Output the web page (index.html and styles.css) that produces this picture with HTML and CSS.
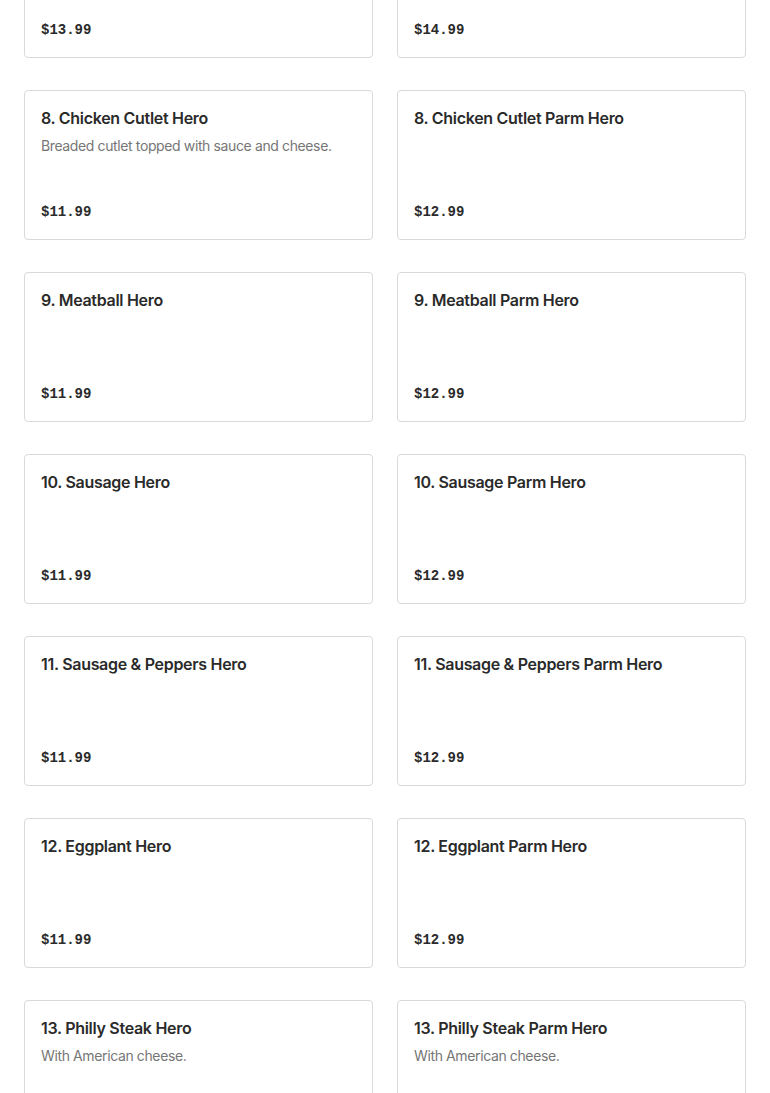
FILE: index.html
```html
<!DOCTYPE html>
<html>
<head>
<meta charset="utf-8">
<link rel="stylesheet" href="styles.css">
</head>
<body>
<div class="grid">
  <div class="card"><div class="price">$13.99</div></div>
  <div class="card"><div class="price">$14.99</div></div>

  <div class="card"><div class="title">8. Chicken Cutlet Hero</div><div class="desc">Breaded cutlet topped with sauce and cheese.</div><div class="price">$11.99</div></div>
  <div class="card"><div class="title">8. Chicken Cutlet Parm Hero</div><div class="price">$12.99</div></div>

  <div class="card"><div class="title">9. Meatball Hero</div><div class="price">$11.99</div></div>
  <div class="card"><div class="title">9. Meatball Parm Hero</div><div class="price">$12.99</div></div>

  <div class="card"><div class="title">10. Sausage Hero</div><div class="price">$11.99</div></div>
  <div class="card"><div class="title">10. Sausage Parm Hero</div><div class="price">$12.99</div></div>

  <div class="card"><div class="title">11. Sausage &amp; Peppers Hero</div><div class="price">$11.99</div></div>
  <div class="card"><div class="title">11. Sausage &amp; Peppers Parm Hero</div><div class="price">$12.99</div></div>

  <div class="card"><div class="title">12. Eggplant Hero</div><div class="price">$11.99</div></div>
  <div class="card"><div class="title">12. Eggplant Parm Hero</div><div class="price">$12.99</div></div>

  <div class="card"><div class="title">13. Philly Steak Hero</div><div class="desc">With American cheese.</div></div>
  <div class="card"><div class="title">13. Philly Steak Parm Hero</div><div class="desc">With American cheese.</div></div>
</div>
</body>
</html>
```

FILE: styles.css
```css
html, body {
  margin: 0;
  padding: 0;
  background: #ffffff;
  overflow: hidden;
}
.grid {
  display: grid;
  grid-template-columns: 1fr 1fr;
  column-gap: 24px;
  row-gap: 32px;
  padding: 0 24px;
  margin-top: -92px;
}
.card {
  box-sizing: border-box;
  height: 150px;
  border: 1px solid #d9d9d9;
  border-radius: 4px;
  padding: 16px 16px 17px;
  display: flex;
  flex-direction: column;
  font-family: Inter, "Noto Sans", sans-serif;
}
.title {
  font-size: 16px;
  font-weight: 600;
  line-height: 22px;
  color: #2a2a2a;
  letter-spacing: -0.3px;
}
.desc {
  margin-top: 7px;
  font-size: 14px;
  line-height: 20px;
  color: #767676;
  letter-spacing: -0.38px;
}
.price {
  margin-top: auto;
  font-family: "Liberation Mono", "DejaVu Sans Mono", monospace;
  font-weight: 700;
  font-size: 14px;
  line-height: 20px;
  color: #2a2a2a;
}
```
